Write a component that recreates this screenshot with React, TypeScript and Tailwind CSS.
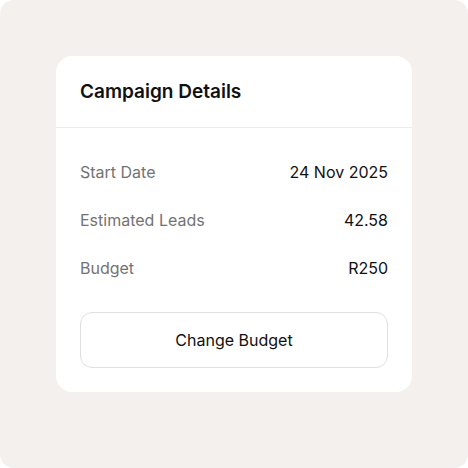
export default function App() {
  const rows = [
    { label: "Start Date", value: "24 Nov 2025" },
    { label: "Estimated Leads", value: "42.58" },
    { label: "Budget", value: "R250" },
  ];

  return (
    <div className="h-[468px] w-[468px] bg-white font-['Inter',sans-serif]">
      <div className="flex h-full w-full items-start justify-center rounded-[14px] bg-[#f3f0ed] pt-14">
        <div className="w-[356px] rounded-2xl bg-white">
          <div className="border-b border-[#eeeceb] px-6 pb-[21px] pt-[22px]">
            <h2 className="text-[19px] font-semibold leading-7 text-[#111111]">Campaign Details</h2>
          </div>
          <div className="flex flex-col gap-6 px-6 pt-8">
            {rows.map((row) => (
              <div key={row.label} className="flex items-center justify-between text-base leading-6">
                <span className="text-[#737373]">{row.label}</span>
                <span className="text-[#111111]">{row.value}</span>
              </div>
            ))}
          </div>
          <div className="px-6 pb-6 pt-8">
            <button
              type="button"
              className="flex h-14 w-full items-center justify-center rounded-xl border border-[#e2e0de] bg-white text-base text-[#111111]"
            >
              Change Budget
            </button>
          </div>
        </div>
      </div>
    </div>
  );
}
